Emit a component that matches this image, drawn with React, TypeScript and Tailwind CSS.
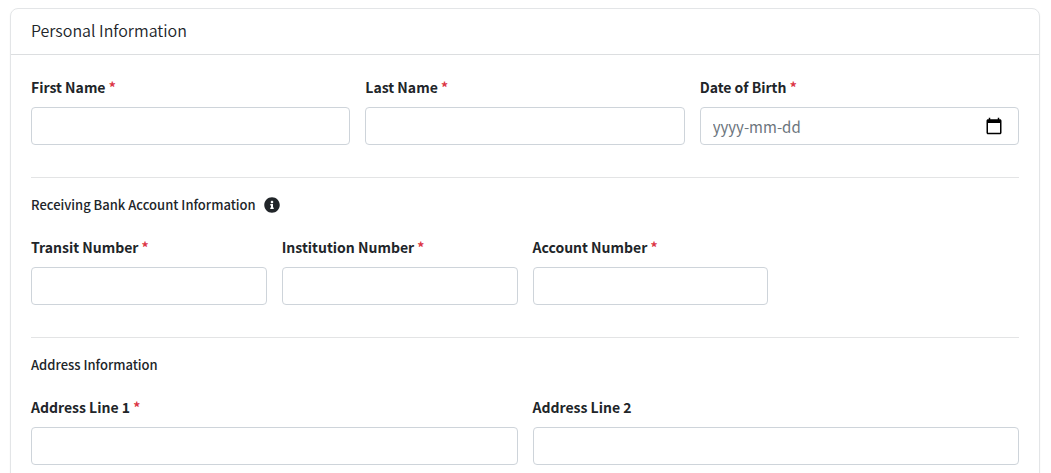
import React from 'react';
import { FaInfoCircle } from 'react-icons/fa';

interface FieldProps {
  id: string;
  label: string;
  required?: boolean;
}

const inputClass =
  'block w-full h-[38px] px-3 rounded border border-[#ced4da] bg-white text-[15px] text-[#212529] placeholder:text-[#6c757d] focus:outline-none focus:border-[#86b7fe]';

const FieldLabel = ({ id, label, required }: FieldProps) => (
  <label htmlFor={id} className="block mb-2 text-sm leading-6 font-bold">
    {label} {required && <span className="text-[#dc3545]">*</span>}
  </label>
);

const TextField = ({ id, label, required }: FieldProps) => (
  <div>
    <FieldLabel id={id} label={label} required={required} />
    <input id={id} type="text" required={required} className={inputClass} />
  </div>
);

const DateField = ({ id, label, required }: FieldProps) => (
  <div>
    <FieldLabel id={id} label={label} required={required} />
    <div className="relative">
      <input id={id} type="text" placeholder="yyyy-mm-dd" required={required} className={inputClass} />
      <button type="button" aria-label="Open calendar" className="absolute inset-y-0 right-4 flex items-center text-black">
        <svg width="18" height="18" viewBox="0 0 24 24" fill="currentColor">
          <path d="M20 3h-1V1h-2v2H7V1H5v2H4c-1.1 0-2 .9-2 2v16c0 1.1.9 2 2 2h16c1.1 0 2-.9 2-2V5c0-1.1-.9-2-2-2zm0 18H4V8h16v13z" />
        </svg>
      </button>
    </div>
  </div>
);

const App = () => {
  return (
    <main className="pl-2.5 pr-[11px] py-2 bg-white text-base text-[#212529] font-['Noto_Sans_CJK_JP','Noto_Sans_CJK_SC',sans-serif]">
      <form className="rounded-lg border border-[#e3e5e7] shadow-xs">
        {/* Card header */}
        <header className="px-5 pt-2.5 pb-3 border-b border-[#dcdee0]">
          <h1 className="leading-[23px] font-[350]">Personal Information</h1>
        </header>

        <div className="p-5">
          <div className="grid grid-cols-3 gap-[15px]">
            <TextField id="first-name" label="First Name" required />
            <TextField id="last-name" label="Last Name" required />
            <DateField id="birth-date" label="Date of Birth" required />
          </div>

          {/* Bank account */}
          <hr className="mt-8 mb-4 border-[#e3e4e5]" />
          <h2 className="flex items-center gap-2 mb-5 text-[13px] leading-[21px] font-medium">
            Receiving Bank Account Information
            <FaInfoCircle size={16} />
          </h2>
          <div className="grid grid-cols-4 gap-[15px]">
            <TextField id="transit-number" label="Transit Number" required />
            <TextField id="institution-number" label="Institution Number" required />
            <TextField id="account-number" label="Account Number" required />
          </div>

          {/* Address */}
          <hr className="mt-8 mb-4 border-[#e3e4e5]" />
          <h2 className="mb-5 text-[13px] leading-[21px] font-medium">Address Information</h2>
          <div className="grid grid-cols-2 gap-[15px]">
            <TextField id="address-line-1" label="Address Line 1" required />
            <TextField id="address-line-2" label="Address Line 2" />
          </div>
        </div>
      </form>
    </main>
  );
};

export default App;
